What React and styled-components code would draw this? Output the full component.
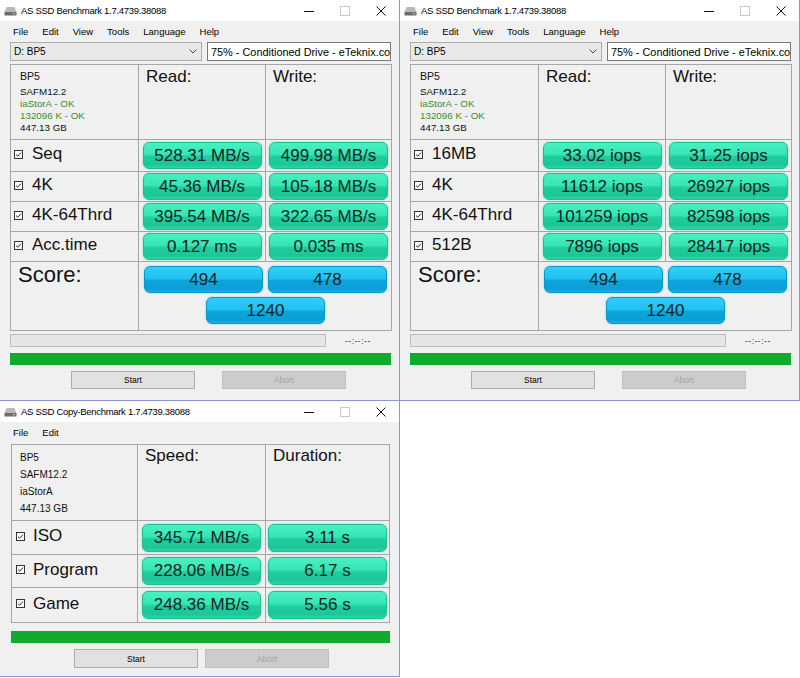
import React from 'react';
import styled, { createGlobalStyle } from 'styled-components';

const GlobalStyle = createGlobalStyle`
  html, body {
    margin: 0;
    padding: 0;
    background: #ffffff;
  }
  body {
    font-family: "Liberation Sans", Arial, sans-serif;
    color: #000;
  }
`

const Desktop = styled.div`
  display: grid;
  grid-template-columns: 400px 400px;
  grid-template-rows: 401px 277px;
  width: 800px;
  height: 678px;
  overflow: hidden;
  background: #fff;
`

const Window = styled.div`
  box-sizing: border-box;
  display: flex;
  flex-direction: column;
  align-self: start;
  height: ${p => p.$height}px;
  background: #f0f0f0;
  border-right: 1px solid #8d96d5;
  border-bottom: 1px solid #8d96d5;
  overflow: hidden;
`

const TitleBar = styled.div`
  display: flex;
  align-items: center;
  height: 21px;
  flex-shrink: 0;
  background: #ffffff;
  padding-left: 4px;
`

const TitleText = styled.span`
  font-size: 9.5px;
  letter-spacing: -0.3px;
  margin-left: 4px;
  white-space: nowrap;
`

const WinControls = styled.div`
  display: flex;
  margin-left: auto;
  height: 100%;
`

const CtrlBox = styled.div`
  width: 36px;
  height: 100%;
  display: flex;
  align-items: center;
  justify-content: center;
`

const MenuBar = styled.div`
  display: flex;
  align-items: center;
  height: 20px;
  flex-shrink: 0;
  padding-left: 6px;
  font-size: 9.5px;
`

const MenuItem = styled.span`
  padding: 0 7px;
`

const ControlsRow = styled.div`
  display: flex;
  gap: 5px;
  height: 19px;
  margin-top: 1px;
  padding-left: 10px;
`

const Combo = styled.div`
  box-sizing: border-box;
  width: 192px;
  display: flex;
  align-items: center;
  padding: 0 4px 0 3px;
  border: 1px solid #adadad;
  background: #e9e9e9;
  font-size: 10px;
`

const Chevron = styled.svg`
  margin-left: auto;
`

const TextBox = styled.div`
  box-sizing: border-box;
  width: 184px;
  display: flex;
  align-items: center;
  padding-left: 3px;
  border: 1px solid #7a7a7a;
  background: #fff;
  font-size: 10.9px;
  white-space: nowrap;
  overflow: hidden;
`

const Table = styled.div`
  display: grid;
  grid-template-columns: ${p => p.$cols};
  grid-template-rows: ${p => p.$rows};
  width: fit-content;
  margin: ${p => p.$margin};
  border-top: 1px solid #a6a6a6;
  border-left: 1px solid #a6a6a6;
`

const Cell = styled.div`
  box-sizing: border-box;
  border-right: 1px solid #a6a6a6;
  border-bottom: 1px solid #a6a6a6;
  min-width: 0;
`

const InfoCell = styled(Cell)`
  padding: ${p => p.$pad};
  font-size: ${p => p.$size}px;
  line-height: ${p => p.$lh}px;
`

const InfoLine = styled.div`
  color: ${p => (p.$ok ? '#2f8f2f' : '#111')};
  font-size: ${p => (p.$big ? '10.5px' : 'inherit')};
  margin-bottom: ${p => (p.$big ? 4 : 0)}px;
  white-space: nowrap;
`

const HeadCell = styled(Cell)`
  padding: ${p => p.$top}px 0 0 7px;
  font-size: 17px;
  line-height: 20px;
  color: #111;
`

const LabelCell = styled(Cell)`
  display: flex;
  align-items: center;
  gap: ${p => p.$gap}px;
  padding: 0 0 3px ${p => p.$left}px;
  font-size: 17px;
  color: #111;
`

const ValueCell = styled(Cell)`
  display: flex;
  align-items: center;
  justify-content: center;
`

const Pill = styled.div`
  box-sizing: border-box;
  width: 119px;
  height: ${p => p.$h}px;
  display: flex;
  align-items: center;
  justify-content: center;
  border-radius: 6px;
  font-size: 17px;
  color: #15231f;
  white-space: nowrap;
  background: ${p =>
    p.$blue
      ? 'linear-gradient(180deg, #33cdf7 0%, #20c1f2 46%, #0ca5da 54%, #0a9fd5 88%, #1aafe2 100%)'
      : 'linear-gradient(180deg, #4af0c2 0%, #35e5b4 46%, #20cd9d 54%, #1dc697 86%, #2ad6a6 100%)'};
  border: 1px solid ${p => (p.$blue ? '#0c98cc' : '#1cbf90')};
  box-shadow: 0 0 2px ${p => (p.$blue ? 'rgba(20,170,230,0.6)' : 'rgba(30,210,160,0.6)')};
`

const ScoreLabel = styled(Cell)`
  padding-left: 7px;
  font-size: 22px;
  line-height: 26px;
  color: #111;
`

const ScoreCell = styled(Cell)`
  grid-column: span 2;
  display: grid;
  grid-template-columns: 119px 119px;
  column-gap: 5px;
  row-gap: 4px;
  align-content: start;
  padding: 4px 0 0 5px;
`

const TotalPill = styled(Pill)`
  grid-column: span 2;
  justify-self: center;
`

const ProgressRow = styled.div`
  display: flex;
  align-items: center;
  height: 13px;
  margin: 3px 0 0 10px;
`

const ProgressTrack = styled.div`
  box-sizing: border-box;
  width: 316px;
  height: 100%;
  background: #e6e6e6;
  border: 1px solid #bcbcbc;
`

const TimeText = styled.span`
  margin-left: 19px;
  font-size: 8.5px;
  color: #333;
  letter-spacing: 0.5px;
`

const GreenBar = styled.div`
  height: 12px;
  width: ${p => p.$w}px;
  margin: ${p => p.$margin};
  background: #10aa2c;
`

const ButtonRow = styled.div`
  display: flex;
  gap: ${p => p.$gap}px;
  margin: 6px 0 0 ${p => p.$left}px;
`

const WinButton = styled.div`
  box-sizing: border-box;
  width: 124px;
  height: ${p => p.$h}px;
  display: flex;
  align-items: center;
  justify-content: center;
  font-size: 8.5px;
  background: ${p => (p.$disabled ? '#cccccc' : '#e1e1e1')};
  border: 1px solid ${p => (p.$disabled ? '#bfbfbf' : '#adadad')};
  color: ${p => (p.$disabled ? '#a3a3a3' : '#000')};
`

const DriveIcon = () => (
  <svg width="13" height="10" viewBox="0 0 13 10">
    <path d="M2.5 1 L10.5 1 L12.5 6 L0.5 6 Z" fill="#b9b9b9" />
    <rect x="0.5" y="6" width="12" height="3.5" fill="#6d6d6d" />
    <rect x="9" y="7.2" width="2" height="1" fill="#cfcfcf" />
  </svg>
)

const CheckBox = () => (
  <svg width="9" height="9" viewBox="0 0 9 9">
    <rect x="0.5" y="0.5" width="8" height="8" fill="#fff" stroke="#333" />
    <path d="M2 4.6 L3.7 6.2 L7 2.6" fill="none" stroke="#222" strokeWidth="1" />
  </svg>
)

const Title = ({ text }) => (
  <TitleBar>
    <DriveIcon />
    <TitleText>{text}</TitleText>
    <WinControls>
      <CtrlBox>
        <svg width="10" height="10"><path d="M0 5.5 H10" stroke="#111" /></svg>
      </CtrlBox>
      <CtrlBox>
        <svg width="10" height="10"><rect x="0.5" y="0.5" width="9" height="9" fill="none" stroke="#c9c9c9" /></svg>
      </CtrlBox>
      <CtrlBox>
        <svg width="10" height="10"><path d="M0.5 0.5 L9.5 9.5 M9.5 0.5 L0.5 9.5" stroke="#111" /></svg>
      </CtrlBox>
    </WinControls>
  </TitleBar>
)

const benchWindows = [
  {
    rows: [
      ['Seq', '528.31 MB/s', '499.98 MB/s'],
      ['4K', '45.36 MB/s', '105.18 MB/s'],
      ['4K-64Thrd', '395.54 MB/s', '322.65 MB/s'],
      ['Acc.time', '0.127 ms', '0.035 ms'],
    ],
  },
  {
    rows: [
      ['16MB', '33.02 iops', '31.25 iops'],
      ['4K', '11612 iops', '26927 iops'],
      ['4K-64Thrd', '101259 iops', '82598 iops'],
      ['512B', '7896 iops', '28417 iops'],
    ],
  },
]

const BenchWindow = ({ rows }) => (
  <Window $height={401}>
    <Title text="AS SSD Benchmark 1.7.4739.38088" />
    <MenuBar>
      {['File', 'Edit', 'View', 'Tools', 'Language', 'Help'].map(m => (
        <MenuItem key={m}>{m}</MenuItem>
      ))}
    </MenuBar>
    <ControlsRow>
      <Combo>
        D: BP5
        <Chevron width="8" height="5" viewBox="0 0 8 5">
          <path d="M0.5 0.5 L4 4 L7.5 0.5" fill="none" stroke="#444" />
        </Chevron>
      </Combo>
      <TextBox>75% - Conditioned Drive - eTeknix.com</TextBox>
    </ControlsRow>
    <Table $cols="128px 127px 126px" $rows="75px 32px 30px 30px 30px 69px" $margin="3px 0 0 10px">
      <InfoCell $pad="5px 0 0 9px" $size={9.8} $lh={12}>
        <InfoLine $big>BP5</InfoLine>
        <InfoLine>SAFM12.2</InfoLine>
        <InfoLine $ok>iaStorA - OK</InfoLine>
        <InfoLine $ok>132096 K - OK</InfoLine>
        <InfoLine>447.13 GB</InfoLine>
      </InfoCell>
      <HeadCell $top={2}>Read:</HeadCell>
      <HeadCell $top={2}>Write:</HeadCell>
      {rows.map(([label, read, write]) => (
        <React.Fragment key={label}>
          <LabelCell $left={3} $gap={9}>
            <CheckBox />
            {label}
          </LabelCell>
          <ValueCell><Pill $h={27}>{read}</Pill></ValueCell>
          <ValueCell><Pill $h={27}>{write}</Pill></ValueCell>
        </React.Fragment>
      ))}
      <ScoreLabel>Score:</ScoreLabel>
      <ScoreCell>
        <Pill $blue $h={27}>494</Pill>
        <Pill $blue $h={27}>478</Pill>
        <TotalPill $blue $h={27}>1240</TotalPill>
      </ScoreCell>
    </Table>
    <ProgressRow>
      <ProgressTrack />
      <TimeText>--:--:--</TimeText>
    </ProgressRow>
    <GreenBar $w={381} $margin="6px 0 0 10px" />
    <ButtonRow $left={71} $gap={27}>
      <WinButton $h={18}>Start</WinButton>
      <WinButton $h={18} $disabled>Abort</WinButton>
    </ButtonRow>
  </Window>
)

const copyRows = [
  ['ISO', '345.71 MB/s', '3.11 s'],
  ['Program', '228.06 MB/s', '6.17 s'],
  ['Game', '248.36 MB/s', '5.56 s'],
]

const CopyWindow = () => (
  <Window $height={276}>
    <Title text="AS SSD Copy-Benchmark 1.7.4739.38088" />
    <MenuBar>
      <MenuItem>File</MenuItem>
      <MenuItem>Edit</MenuItem>
    </MenuBar>
    <Table $cols="126px 128px 124px" $rows="76px 34px 33px 35px" $margin="2px 0 0 11px">
      <InfoCell $pad="4px 0 0 8px" $size={10} $lh={17}>
        <InfoLine>BP5</InfoLine>
        <InfoLine>SAFM12.2</InfoLine>
        <InfoLine>iaStorA</InfoLine>
        <InfoLine>447.13 GB</InfoLine>
      </InfoCell>
      <HeadCell $top={1}>Speed:</HeadCell>
      <HeadCell $top={1}>Duration:</HeadCell>
      {copyRows.map(([label, speed, dur]) => (
        <React.Fragment key={label}>
          <LabelCell $left={4} $gap={8}>
            <CheckBox />
            {label}
          </LabelCell>
          <ValueCell><Pill $h={28}>{speed}</Pill></ValueCell>
          <ValueCell><Pill $h={28}>{dur}</Pill></ValueCell>
        </React.Fragment>
      ))}
    </Table>
    <GreenBar $w={379} $margin="8px 0 0 11px" />
    <ButtonRow $left={74} $gap={7}>
      <WinButton $h={19}>Start</WinButton>
      <WinButton $h={19} $disabled>Abort</WinButton>
    </ButtonRow>
  </Window>
)

export default function App() {
  return (
    <>
      <GlobalStyle />
      <Desktop>
        {benchWindows.map((w, i) => (
          <BenchWindow key={i} rows={w.rows} />
        ))}
        <CopyWindow />
      </Desktop>
    </>
  )
}
